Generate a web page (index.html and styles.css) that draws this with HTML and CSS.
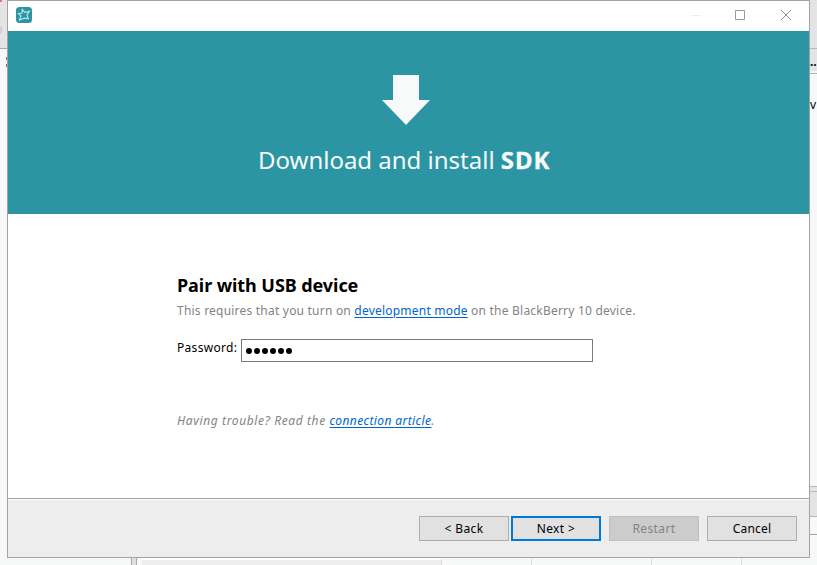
FILE: index.html
```html
<!DOCTYPE html>
<html lang="en">
<head>
<meta charset="utf-8">
<title>Download and install SDK</title>
<link rel="stylesheet" href="styles.css">
</head>
<body>
<div class="desktop">
  <div class="strip-left"><div class="toolbar-left"><i class="corner"></i><i class="ring"></i></div><div class="pane-left"><i></i><i></i></div></div>
  <main class="window">
    <header class="titlebar">
      <svg class="logo" width="16" height="16" viewBox="0 0 16 16"><rect width="16" height="16" rx="3.5" fill="#2c95a4"/><path d="M6.3 2.5 8.8 5.3 13.3 4.4 11 8 12.3 11.8 8.3 11.2 3.6 13 4.9 9 2.5 6.6 6 6Z" fill="none" stroke="#b9e3e5" stroke-width="1.2"/></svg>
      <div class="controls">
        <svg width="10" height="10" viewBox="0 0 10 10"><path d="M0 5.5H10" stroke="#ebebeb"/></svg>
        <svg width="10" height="10" viewBox="0 0 10 10"><path d="M.5.5H9.5V9.5H.5Z" fill="none" stroke="#999"/></svg>
        <svg width="10" height="10" viewBox="0 0 10 10"><path d="M0 0 10 10M10 0 0 10" stroke="#8c8c8c"/></svg>
      </div>
    </header>
    <section class="banner">
      <svg width="48" height="50" viewBox="0 0 48 50"><path d="M11 0H37V25H48L24 50 0 25H11Z" fill="#f7faf9"/></svg>
      <h1>Download and install <b>SDK</b></h1>
    </section>
    <section class="content">
      <h2>Pair with USB device</h2>
      <p class="note">This requires that you turn on <a>development mode</a> on the BlackBerry 10 device.</p>
      <div class="field"><label for="pw">Password:</label><div class="input" id="pw"><i></i><i></i><i></i><i></i><i></i><i></i></div></div>
      <p class="help">Having trouble? Read the <a>connection article</a>.</p>
    </section>
    <footer>
      <button class="back">&lt; Back</button><button class="next">Next &gt;</button><button class="restart" disabled>Restart</button><button class="cancel">Cancel</button>
    </footer>
  </main>
  <div class="strip-right"><div class="r1"></div><div class="r2">..</div><div class="r3">v</div><div class="r4"></div><div class="r5"></div><div class="r6"></div></div>
  <div class="strip-bottom"><div class="b1"></div><div class="b2"></div><div class="b3"></div><div class="b4"></div><div class="b5"></div><div class="b6"></div><div class="b7"></div></div>
</div>
</body>
</html>
```
FILE: styles.css
```css
* { box-sizing: border-box; }
body { margin: 0; font: 12px/16px "Noto Sans", "Open Sans", sans-serif; color: #000; background: #f6f9f8; overflow: hidden; }
h1, h2, p { margin: 0; white-space: nowrap; }
.desktop { display: grid; grid-template: 558px 7px / 7px 803px 7px; width: 817px; height: 565px; }
.strip-left { display: flex; flex-direction: column; }
.toolbar-left { height: 49px; background: #e4e4e4; border-bottom: 1px solid #a9a9a9; overflow: hidden; }
.corner { display: block; width: 2px; height: 2px; background: #df7b61; }
.ring { display: block; width: 8px; height: 8px; margin: 24px 0 0 -6px; border: 1px solid #bbb; border-radius: 50%; }
.pane-left { padding: 8px 0 0 6px; }
.pane-left i { display: block; width: 1px; height: 3px; background: #777; margin-bottom: 4px; }
.window { display: flex; flex-direction: column; border: 1px solid #a3a3a3; background: #fff; }
.titlebar { display: flex; justify-content: space-between; align-items: flex-start; height: 30px; padding: 6px 18px 0 8px; }
.controls { display: flex; gap: 35px; padding-top: 3px; }
.controls svg:nth-child(2) { margin: 0 1px 0 -1px; }
svg { display: block; }
.banner { height: 183px; background: #2c95a4; display: flex; flex-direction: column; padding: 44px 0 0 250px; color: #f7faf9; }
.banner svg { margin-left: 124px; }
h1 { margin-top: 17px; font: 400 24px/36px "Noto Sans", sans-serif; letter-spacing: -.01px; }
h1 b { font-weight: 700; letter-spacing: .9px; -webkit-text-stroke: .3px; }
.content { height: 284px; padding: 59px 0 0 169px; }
h2 { font-size: 18px; line-height: 24px; font-weight: 700; letter-spacing: -.07px; }
.note { margin-top: 6px; color: #838383; letter-spacing: .215px; }
a { color: #0066cc; text-decoration: underline; text-underline-offset: 2px; }
.field { display: flex; margin-top: 20px; }
label { width: 64px; padding-top: 1px; white-space: nowrap; letter-spacing: .3px; }
.input { width: 352px; height: 23px; border: 1px solid #7a7a7a; display: flex; gap: 2px; padding: 8px 0 0 4px; }
.input i { width: 6px; height: 6px; border-radius: 50%; background: #000; }
.help { margin-top: 51px; font-style: italic; color: #838383; letter-spacing: .62px; }
.help a { letter-spacing: .4px; }
footer { flex: 1; display: flex; border-top: 1px solid #a3a3a3; background: #ededed; box-shadow: inset 0 1px #fff; padding: 17px 0 0 411px; }
button { width: 90px; height: 25px; padding: 0; border: 1px solid #adadad; background: #e1e1e1; font: inherit; letter-spacing: .4px; color: #000; }
.next { margin-left: 2px; border: 2px solid #0078d7; }
.restart { margin-left: 8px; background: #ccc; border-color: #bfbfbf; color: #838383; }
.cancel { margin-left: 8px; letter-spacing: .2px; }
.strip-right { overflow: hidden; }
.r1 { height: 49px; background: #e4e4e4; border-bottom: 1px solid #b8b8b8; }
.r2 { height: 25px; background: #e4e4e4; border-bottom: 1px solid #b0b0b0; box-shadow: inset 0 -2px #f6f9f8; font-weight: 700; line-height: 25px; }
.r3 { height: 412px; padding-top: 23px; }
.r4 { height: 6px; border: solid #b8b8b8; border-width: 1px 0; background: #e4e4e4; }
.r5 { height: 25px; background: #e4e4e4; border-bottom: 1px solid #b8b8b8; }
.r6 { height: 18px; border-bottom: 1px solid #a3a3a3; }
.strip-bottom { grid-column: 1 / -1; display: flex; }
.b1 { width: 131px; }
.b2 { width: 6px; background: #e0e0e0; border: solid #aaa; border-width: 0 1px; }
.b3 { width: 5px; }
.b4 { width: 300px; background: #ededed; border-right: 1px solid #ddd; border-top: 2px solid #fff; }
.b5, .b6 { border-right: 1px solid #ddd; width: 90px; }
.b6 { width: 120px; }
.b7 { width: 90px; border-right: 1px solid #ddd; }
```
